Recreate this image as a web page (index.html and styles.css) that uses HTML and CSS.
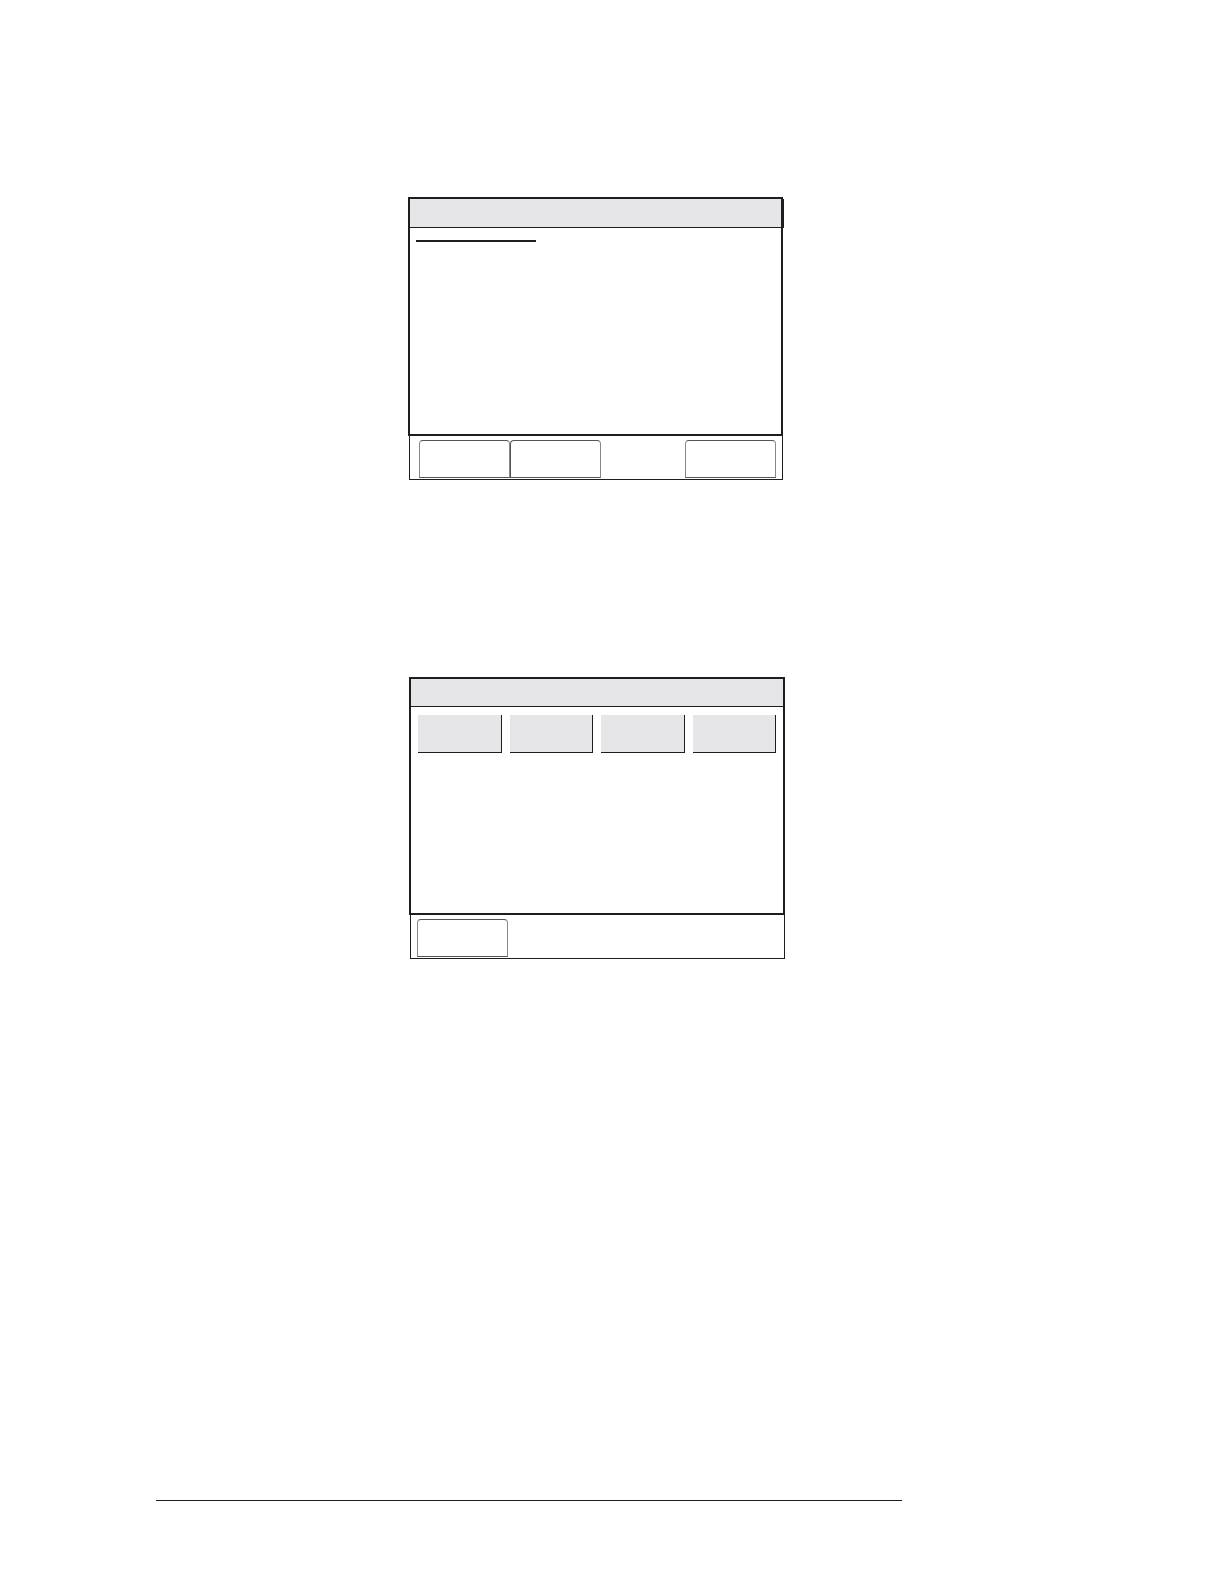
FILE: index.html
```html
<!DOCTYPE html>
<html lang="en">
<head>
    <meta charset="UTF-8">
    <meta name="viewport" content="width=device-width, initial-scale=1.0">
    <title>Display screens</title>
    <link rel="stylesheet" href="styles.css">
</head>
<body>
    <main class="page">
        <section class="row">
            <div class="panel">
                <div class="screen">
                    <div class="title-bar title-raised"></div>
                    <div class="content">
                        <hr class="underline">
                    </div>
                </div>
                <div class="tabs">
                    <button class="tab" type="button" aria-label="Tab 1"></button>
                    <button class="tab" type="button" aria-label="Tab 2"></button>
                    <button class="tab tab-end" type="button" aria-label="Tab 3"></button>
                </div>
            </div>
        </section>

        <section class="row row-keys">
            <div class="panel">
                <div class="screen">
                    <div class="title-bar"></div>
                    <div class="content keys">
                        <button class="key" type="button" aria-label="Key 1"></button>
                        <button class="key" type="button" aria-label="Key 2"></button>
                        <button class="key" type="button" aria-label="Key 3"></button>
                        <button class="key" type="button" aria-label="Key 4"></button>
                    </div>
                </div>
                <div class="tabs">
                    <button class="tab" type="button" aria-label="Tab 1"></button>
                </div>
            </div>
        </section>

        <footer class="footer">
            <hr class="footer-line">
        </footer>
    </main>
</body>
</html>
```
FILE: styles.css
```css
* {
    margin: 0;
    padding: 0;
    box-sizing: border-box;
}

body {
    font-family: "Liberation Sans", Arial, sans-serif;
    background-color: #fff;
}

.page {
    display: flex;
    flex-direction: column;
    min-height: 100vh;
    padding: 197px 0 83px;
}

/* margin, panel, margin */
.row {
    display: grid;
    grid-template-columns: 408fr 375fr 441fr;
    margin-bottom: 197px;
}

.row-keys {
    grid-template-columns: 409fr 376fr 439fr;
    margin-bottom: 0;
}

.panel {
    grid-column: 2;
}

.screen {
    border: 2px solid #1f1d20;
}

.title-bar {
    height: 29px;
    background-color: #e6e6e8;
    border-bottom: 1px solid #1f1d20;
}

.row-keys .title-bar {
    height: 28px;
}

.title-raised {
    box-shadow: 3px 0 0 #1f1d20;
}

.content {
    min-height: 206px;
    padding: 12px 6px;
}

.underline {
    width: 120px;
    border: none;
    border-top: 2px solid #1f1d20;
}

.keys {
    display: grid;
    grid-template-columns: repeat(4, 1fr);
    align-items: start;
    gap: 8px;
    padding: 8px 7px;
}

.key {
    height: 38px;
    background-color: #e6e6e8;
    border: none;
    border-right: 1px solid #1f1d20;
    border-bottom: 1px solid #1f1d20;
}

.tabs {
    display: flex;
    margin-left: 1px;
    padding: 4px 6px 1px 9px;
    border: 1px solid #1f1d20;
    border-top: none;
}

.row-keys .tabs {
    padding-left: 6px;
}

.tab {
    width: 91px;
    height: 38px;
    background-color: #fff;
    border: 1px solid #555;
    border-left-color: #888;
    border-right-color: #888;
    border-radius: 4px 4px 0 0;
}

/* neighbouring tabs share a darker edge */
.tab + .tab:not(.tab-end) {
    border-left-color: #555;
}

.tab-end {
    margin-left: auto;
}

.footer {
    display: grid;
    grid-template-columns: 156fr 746fr 322fr;
    margin-top: auto;
}

.footer-line {
    grid-column: 2;
    border: none;
    border-top: 1px solid #1f1d20;
}
```
